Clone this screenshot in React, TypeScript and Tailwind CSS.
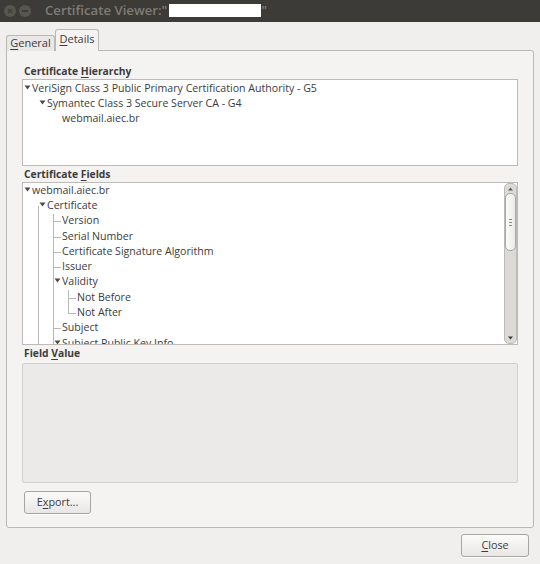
import React from "react";

// Certificate Viewer — GTK (Ubuntu Ambiance) dialog, Details tab.

type Guide = "pass" | "end" | "lower" | "none";

type Row = {
  label: string;
  depth: number;
  open?: boolean; // has an expander (always shown open here)
  guides?: Guide[];
};

const HIERARCHY: Row[] = [
  { label: "VeriSign Class 3 Public Primary Certification Authority - G5", depth: 0, open: true },
  { label: "Symantec Class 3 Secure Server CA - G4", depth: 1, open: true, guides: ["none"] },
  { label: "webmail.aiec.br", depth: 2, guides: ["none", "none"] },
];

const FIELDS: Row[] = [
  { label: "webmail.aiec.br", depth: 0, open: true },
  { label: "Certificate", depth: 1, open: true, guides: ["lower"] },
  { label: "Version", depth: 2, guides: ["pass", "pass"] },
  { label: "Serial Number", depth: 2, guides: ["pass", "pass"] },
  { label: "Certificate Signature Algorithm", depth: 2, guides: ["pass", "pass"] },
  { label: "Issuer", depth: 2, guides: ["pass", "pass"] },
  { label: "Validity", depth: 2, open: true, guides: ["pass", "pass"] },
  { label: "Not Before", depth: 3, guides: ["pass", "pass", "pass"] },
  { label: "Not After", depth: 3, guides: ["pass", "pass", "end"] },
  { label: "Subject", depth: 2, guides: ["pass", "pass"] },
  { label: "Subject Public Key Info", depth: 2, open: true, guides: ["pass", "pass"] },
];

function Mnemonic({ text, at }: { text: string; at: number }) {
  return (
    <>
      {text.slice(0, at)}
      <span className="underline underline-offset-2">{text[at]}</span>
      {text.slice(at + 1)}
    </>
  );
}

function Expander() {
  return (
    <svg width="7" height="7" viewBox="0 0 7 7" className="-mt-[3px]" aria-hidden="true">
      <path d="M0.5 1.5h6L3.5 5.5z" fill="#4c4c4c" />
    </svg>
  );
}

function TreeRow({ row, lines, h }: { row: Row; lines: boolean; h: string }) {
  const guides = row.guides ?? [];
  return (
    <div className={`flex items-stretch ${h}`}>
      {guides.map((g, i) => (
        <div key={i} className="relative w-[15px] shrink-0">
          {lines && g === "pass" && <div className="absolute right-0 top-0 bottom-0 w-px bg-[#b8b8b8]" />}
          {lines && g === "end" && <div className="absolute right-0 top-0 h-1/2 w-px bg-[#b8b8b8]" />}
          {lines && g === "lower" && <div className="absolute right-0 top-1/2 bottom-0 w-px bg-[#b8b8b8]" />}
        </div>
      ))}
      <div className="relative flex w-[8px] shrink-0 items-center">
        {row.open ? (
          <Expander />
        ) : (
          lines && row.depth > 0 && <div className="absolute left-[-1px] top-1/2 h-px w-[8px] bg-[#b8b8b8]" />
        )}
      </div>
      <div className="flex items-center whitespace-nowrap">{row.label}</div>
    </div>
  );
}

function Scrollbar() {
  return (
    <div className="flex w-[13px] shrink-0 flex-col items-center rounded-[5px] border border-[#bdbbb7] bg-[#dcdad6] py-[1px]">
      <svg width="7" height="8" viewBox="0 0 7 8" aria-hidden="true">
        <path d="M1 5.5h5L3.5 2.5z" fill="#5c5c5c" />
      </svg>
      <div className="flex h-[58px] w-[11px] flex-col items-center justify-center gap-[2px] rounded-[5px] border border-[#a9a7a3] bg-gradient-to-r from-[#fbfbfa] to-[#ecebe9]">
        <div className="h-px w-[3px] bg-[#8d8b87]" />
        <div className="h-px w-[3px] bg-[#8d8b87]" />
        <div className="h-px w-[3px] bg-[#8d8b87]" />
      </div>
      <div className="flex-1" />
      <svg width="7" height="8" viewBox="0 0 7 8" aria-hidden="true">
        <path d="M1 2.5h5L3.5 5.5z" fill="#3c3c3c" />
      </svg>
    </div>
  );
}

function Button({ children, className = "" }: { children: React.ReactNode; className?: string }) {
  return (
    <button
      className={`flex h-[23px] items-center justify-center rounded-[3px] border border-[#a7a5a0] bg-gradient-to-b from-[#fbfbfa] to-[#e8e7e5] text-[10.8px] text-[#3c3c3c] shadow-[0_1px_0_#ffffff] ${className}`}
    >
      {children}
    </button>
  );
}

export default function App() {
  return (
    <div className="flex h-[564px] w-[540px] flex-col bg-[#f0efee] font-['Open_Sans',_sans-serif] text-[10.6px] text-[#3c3c3c]">
      {/* Title bar */}
      <div className="flex h-[22px] shrink-0 items-center bg-[#3c3b37] pl-[4px]">
        <div className="flex gap-[3px]">
          <div className="flex h-[12px] w-[12px] items-center justify-center rounded-full bg-[#58574f]">
            <svg width="6" height="6" viewBox="0 0 6 6" aria-hidden="true">
              <path d="M1 1l4 4M5 1L1 5" stroke="#3c3b37" strokeWidth="1.2" />
            </svg>
          </div>
          <div className="flex h-[12px] w-[12px] items-center justify-center rounded-full bg-[#58574f]">
            <div className="h-[1.5px] w-[6px] bg-[#3c3b37]" />
          </div>
        </div>
        <div className="ml-[14px] flex items-center text-[13.2px] font-semibold text-[#7f7c75]">
          <span>Certificate Viewer:"</span>
          <div className="ml-[2px] h-[13px] w-[92px] bg-white" />
          <span>"</span>
        </div>
      </div>

      {/* Tabs */}
      <div className="relative z-10 -mb-px flex h-[29px] shrink-0 items-end pl-[6px]">
        <div className="flex h-[16px] w-[49px] items-center justify-center rounded-t-[3px] border border-b-0 border-[#bab8b3] bg-[#e9e8e6] pb-[1px] text-[11px]">
          <Mnemonic text="General" at={0} />
        </div>
        <div className="flex h-[22px] w-[44px] items-center justify-center rounded-t-[3px] border border-b-0 border-[#bab8b3] bg-[#f4f3f2] pb-[3px] text-[11px]">
          <Mnemonic text="Details" at={0} />
        </div>
      </div>

      {/* Notebook page */}
      <div className="mx-[6px] flex h-[478px] shrink-0 flex-col rounded-b-[3px] rounded-tr-[3px] border border-[#bab8b3] bg-[#f4f3f2] px-[15px] pt-[12px]">
        <div className="ml-[2px] h-[16px] text-[10.3px] font-bold leading-[16px]">
          Certificate <Mnemonic text="Hierarchy" at={0} />
        </div>
        <div className="h-[87px] border border-[#bdbbb7] bg-white pl-[1px] pt-[1px]">
          {HIERARCHY.map((r) => (
            <TreeRow key={r.label} row={r} lines={false} h="h-[15px]" />
          ))}
        </div>

        <div className="ml-[2px] mt-[1px] h-[15px] text-[10.3px] font-bold leading-[15px]">
          Certificate <Mnemonic text="Fields" at={0} />
        </div>
        <div className="flex h-[163px] overflow-hidden border border-[#bdbbb7] bg-white">
          <div className="flex-1 overflow-hidden pl-[1px]">
            {FIELDS.map((r) => (
              <TreeRow key={r.label} row={r} lines h="h-[15.3px]" />
            ))}
          </div>
          <Scrollbar />
        </div>

        <div className="ml-[2px] h-[17px] text-[10.3px] font-bold leading-[17px]">
          Field <Mnemonic text="Value" at={0} />
        </div>
        <div className="mt-[1px] h-[120px] rounded-[2px] border border-[#d3d1cd] bg-[#ebeae8]" />

        <div className="ml-[2px] mt-[8px]">
          <Button className="w-[67px]">
            <Mnemonic text="Export..." at={1} />
          </Button>
        </div>
      </div>

      {/* Action area */}
      <div className="flex justify-end pr-[11px] pt-[6px]">
        <Button className="w-[68px]">
          <Mnemonic text="Close" at={0} />
        </Button>
      </div>
    </div>
  );
}
